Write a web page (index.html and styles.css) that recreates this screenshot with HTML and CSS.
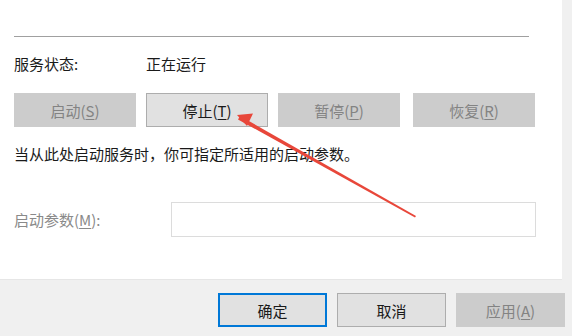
FILE: index.html
```html
<!doctype html>
<html>
<head>
    <title>服务属性</title>
    <link rel="stylesheet" href="styles.css">
</head>
<body>
<div class="panel">
    <div class="divider"></div>
    <div class="status-row">
        <span class="status-label">服务状态:</span>
        <span class="status-value">正在运行</span>
    </div>
    <div class="btn-row">
        <div class="btn btn-disabled">启动(<u>S</u>)</div>
        <div class="btn">停止(<u>T</u>)</div>
        <div class="btn btn-disabled">暂停(<u>P</u>)</div>
        <div class="btn btn-disabled">恢复(<u>R</u>)</div>
    </div>
    <div class="hint">当从此处启动服务时，你可指定所适用的启动参数。</div>
    <div class="param-row">
        <span class="param-label">启动参数(<u>M</u>):</span>
        <div class="param-input"></div>
    </div>
</div>
<div class="footer">
    <div class="btn btn-wide btn-default">确定</div>
    <div class="btn btn-wide">取消</div>
    <div class="btn btn-wide btn-disabled">应用(<u>A</u>)</div>
</div>

<!-- red annotation arrow -->
<svg class="arrow" width="572" height="336" viewBox="0 0 572 336">
    <polygon points="240,116 416,216 415,217.5 238,119.5" fill="#e8473a"/>
    <polygon points="237,115 253,113.5 247,126" fill="#e8473a"/>
</svg>
</body>
</html>
```

FILE: styles.css
```css
* { margin: 0; padding: 0; box-sizing: border-box; }
body { width: 572px; height: 336px; background-color: #f0f0f0; font-family: "Noto Sans CJK SC", "Microsoft YaHei", sans-serif; font-size: 15px; color: #1a1a1a; position: relative; overflow: hidden; }
u { text-underline-offset: 2px; }

.panel { width: 562px; height: 280px; background-color: #fff; padding: 36px 0 0 14px; border-bottom: 1px solid #e6e6e6; }
.divider { width: 515px; height: 1px; background-color: #a0a0a0; }

.status-row { display: flex; align-items: center; height: 24px; margin-top: 14px; }
.status-label { width: 132px; }

.btn-row { display: flex; gap: 10px; margin-top: 18px; }
.btn { height: 34px; display: flex; align-items: center; justify-content: center; background-color: #e1e1e1; border: 1px solid #adadad; color: #1a1a1a; }
.btn-row .btn { width: 122px; }
.btn-row .btn:nth-child(4) { margin-left: 3px; }
.btn-disabled { background-color: #cccccc; border-color: #cccccc; color: #838383; }

.hint { margin-top: 15px; height: 24px; line-height: 24px; }

.param-row { display: flex; align-items: center; margin-top: 36px; }
.param-label { width: 157px; color: #8a8a8a; }
.param-input { width: 365px; height: 35px; border: 1px solid #dcdcdc; background-color: #fff; }

.footer { display: flex; justify-content: flex-end; gap: 10px; padding: 13px 7px 0 0; }
.btn-wide { width: 109px; height: 34px; }
.btn-default { border: 2px solid #0078d7; }

.arrow { position: absolute; left: 0; top: 0; }
```
